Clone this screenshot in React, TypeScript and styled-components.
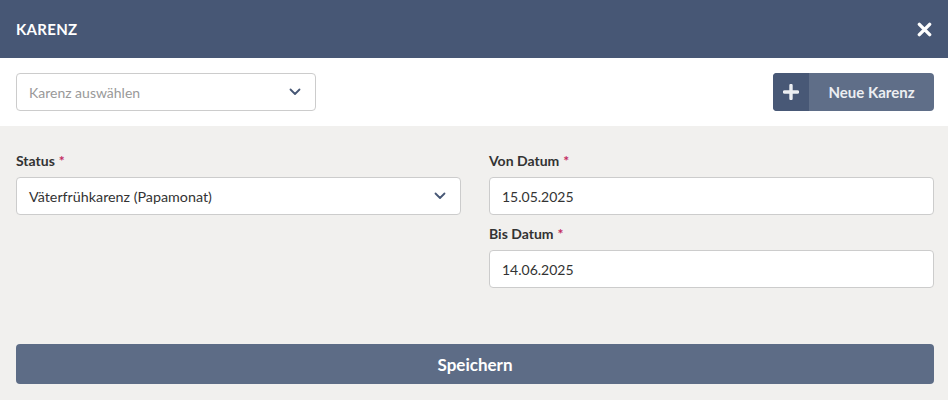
import React from 'react';
import styled, { createGlobalStyle } from 'styled-components';

const GlobalStyle = createGlobalStyle`
  html, body {
    margin: 0;
    padding: 0;
    background: #f1f0ee;
    font-family: Lato, "Open Sans", sans-serif;
  }
  * { box-sizing: border-box; }
`;

const Modal = styled.div`
  width: 948px;
  height: 400px;
  background: #f1f0ee;
  display: flex;
  flex-direction: column;
`;

const Header = styled.div`
  height: 58px;
  background: #475775;
  display: flex;
  align-items: center;
  justify-content: space-between;
  padding: 0 16px 0 16px;
`;

const Title = styled.h2`
  margin: 0;
  font-size: 15px;
  font-weight: 700;
  color: #fff;
  letter-spacing: 0.3px;
`;

const CloseButton = styled.button`
  border: none;
  background: none;
  padding: 0;
  width: 16px;
  height: 16px;
  display: flex;
  align-items: center;
  justify-content: center;
  cursor: pointer;
`;

const Toolbar = styled.div`
  background: #fff;
  padding: 15px 14px 15px 16px;
  display: flex;
  align-items: center;
  justify-content: space-between;
`;

const SelectBox = styled.div<{ $width?: string }>`
  width: ${p => p.$width || '100%'};
  height: 38px;
  background: #fff;
  border: 1px solid #cccccc;
  border-radius: 4px;
  display: flex;
  align-items: center;
  justify-content: space-between;
  padding: 0 14px 0 12px;
  font-size: 14px;
`;

const SelectText = styled.span<{ $placeholder?: boolean }>`
  color: ${p => (p.$placeholder ? '#999' : '#333')};
  font-size: ${p => (p.$placeholder ? '14px' : '14.3px')};
`;

const AddButton = styled.button`
  height: 38px;
  width: 161px;
  border: none;
  border-radius: 4px;
  overflow: hidden;
  padding: 0;
  display: flex;
  background: #5f6e88;
  cursor: pointer;
  font-family: inherit;
`;

const AddIcon = styled.span`
  width: 36px;
  height: 100%;
  background: #485876;
  display: flex;
  align-items: center;
  justify-content: center;
`;

const AddLabel = styled.span`
  flex: 1;
  display: flex;
  align-items: center;
  justify-content: center;
  color: #eceef2;
  font-size: 15px;
  font-weight: 700;
`;

const Body = styled.div`
  flex: 1;
  padding: 26px 14px 16px 16px;
  display: flex;
  flex-direction: column;
`;

const Grid = styled.div`
  display: grid;
  grid-template-columns: 1fr 1fr;
  column-gap: 28px;
`;

const Column = styled.div`
  display: flex;
  flex-direction: column;
  gap: 10px;
`;

const Field = styled.div`
  display: flex;
  flex-direction: column;
  gap: 8px;
`;

const Label = styled.label`
  font-size: 14px;
  line-height: 17px;
  font-weight: 700;
  color: #333;
`;

const Required = styled.span`
  color: #c2285e;
  margin-left: 4px;
`;

const Input = styled.div`
  height: 38px;
  background: #fff;
  border: 1px solid #cccccc;
  border-radius: 4px;
  display: flex;
  align-items: center;
  padding: 0 12px;
  font-size: 14px;
  color: #333;
`;

const SaveButton = styled.button`
  margin-top: auto;
  height: 40px;
  width: 100%;
  border: none;
  border-radius: 4px;
  background: #5d6c86;
  color: #fff;
  font-family: inherit;
  font-size: 17px;
  font-weight: 700;
  cursor: pointer;
`;

const Chevron = () => (
  <svg width="12" height="8" viewBox="0 0 12 8">
    <path d="M1.5 1.5 L6 6 L10.5 1.5" fill="none" stroke="#475775" strokeWidth="1.8" strokeLinecap="round" strokeLinejoin="round" />
  </svg>
);

const App: React.FC = () => (
  <>
    <GlobalStyle />
    <Modal>
      <Header>
        <Title>KARENZ</Title>
        <CloseButton aria-label="Schließen">
          <svg width="15" height="15" viewBox="0 0 16 16">
            <path d="M2.5 2.5 L13.5 13.5 M13.5 2.5 L2.5 13.5" stroke="#fff" strokeWidth="3.6" strokeLinecap="round" />
          </svg>
        </CloseButton>
      </Header>
      <Toolbar>
        <SelectBox $width="300px">
          <SelectText $placeholder>Karenz auswählen</SelectText>
          <Chevron />
        </SelectBox>
        <AddButton>
          <AddIcon>
            <svg width="16" height="16" viewBox="0 0 16 16">
              <path d="M8 1.5 V14.5 M1.5 8 H14.5" stroke="#eceef2" strokeWidth="3.4" strokeLinecap="round" />
            </svg>
          </AddIcon>
          <AddLabel>Neue Karenz</AddLabel>
        </AddButton>
      </Toolbar>
      <Body>
        <Grid>
          <Column>
            <Field>
              <Label>Status<Required>*</Required></Label>
              <SelectBox>
                <SelectText>Väterfrühkarenz (Papamonat)</SelectText>
                <Chevron />
              </SelectBox>
            </Field>
          </Column>
          <Column>
            <Field>
              <Label>Von Datum<Required>*</Required></Label>
              <Input>15.05.2025</Input>
            </Field>
            <Field>
              <Label>Bis Datum<Required>*</Required></Label>
              <Input>14.06.2025</Input>
            </Field>
          </Column>
        </Grid>
        <SaveButton>Speichern</SaveButton>
      </Body>
    </Modal>
  </>
);

export default App;
